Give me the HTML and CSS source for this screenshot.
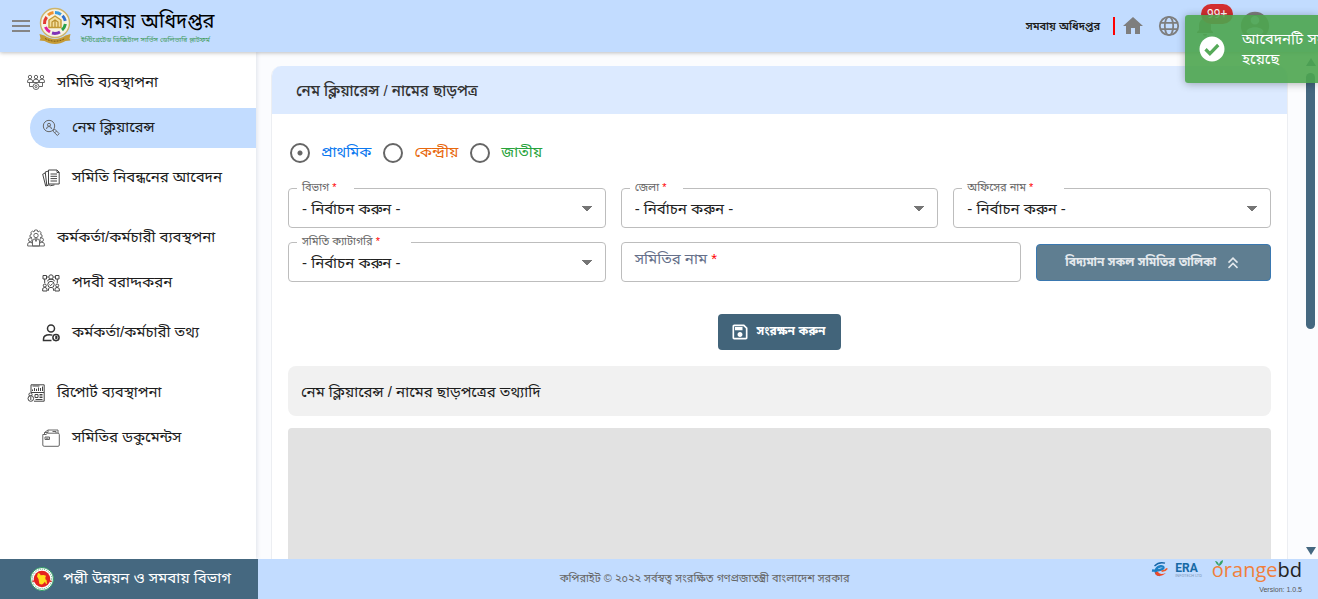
FILE: index.html
```html
<!DOCTYPE html>
<html lang="bn">
<head>
<meta charset="utf-8">
<meta name="viewport" content="width=device-width, initial-scale=1">
<title>নেম ক্লিয়ারেন্স</title>
<link rel="stylesheet" href="styles.css">
</head>
<body>
<div class="app">
  <header class="topbar">
    <button class="icon-btn menu-btn" type="button" aria-label="মেনু">
      <svg width="20" height="14" viewBox="0 0 20 14"><path d="M1 2h18M1 7h18M1 12h18" stroke="#858585" stroke-width="2"/></svg>
    </button>
    <svg class="emblem" width="34" height="38" viewBox="0 0 34 38" aria-hidden="true">
      <circle cx="17" cy="16" r="14.500" fill="#f6f3e4" stroke="#cdb46a" stroke-width="1.400"/>
      <g fill="none" stroke-width="3">
        <path d="M17 5.500a10.500 10.500 0 0 1 6 2" stroke="#3b9de0"/>
        <path d="M24.500 8.800a10.500 10.500 0 0 1 2.800 5" stroke="#2f6fd0"/>
        <path d="M27.400 17a10.500 10.500 0 0 1-3.400 6" stroke="#28a04a"/>
        <path d="M22 25a10.500 10.500 0 0 1-8 1" stroke="#8034b8"/>
        <path d="M12 25a10.500 10.500 0 0 1-4.600-5" stroke="#e0219a"/>
        <path d="M6.500 17a10.500 10.500 0 0 1 2.200-7" stroke="#e23b32"/>
        <path d="M10 8.200a10.500 10.500 0 0 1 5.500-2.600" stroke="#f0902e"/>
      </g>
      <path d="M17 9l6 4v7.500H11V13z" fill="#f3dfa0" stroke="#c49a34" stroke-width="1.400"/>
      <path d="M14 20v-5l3-2 3 2v5M17 13v7" fill="none" stroke="#b98e2c" stroke-width="1.200"/>
      <path d="M1.500 27l5 1.500C13 33 21 33 27.500 28.500l5-1.500-1 4.500 1 2-5 .5C21 38 13 38 6.500 34l-5-.5 1-2z" fill="#c69b35"/>
      <path d="M7 31.500c6.500 3.600 13.500 3.600 20 0" fill="none" stroke="#7d5d15" stroke-width="1" stroke-dasharray="2 1"/>
    </svg>
    <div class="brand">
      <h1 class="brand-name">সমবায় অধিদপ্তর</h1>
      <p class="brand-tag">ইন্টিগ্রেটেড ডিজিটাল সার্ভিস ডেলিভারি প্লাটফর্ম</p>
    </div>
    <div class="top-actions">
      <span class="office">সমবায় অধিদপ্তর</span>
      <button class="icon-btn" type="button" aria-label="হোম"><svg width="24" height="24" viewBox="0 0 24 24" fill="#7e7e7e"><path d="M10 20v-6h4v6h5v-8h3L12 3 2 12h3v8z"/></svg></button>
      <button class="icon-btn" type="button" aria-label="ভাষা"><svg width="24" height="24" viewBox="0 0 24 24" fill="none" stroke="#7e7e7e" stroke-width="1.800"><circle cx="12" cy="12" r="9.200"/><ellipse cx="12" cy="12" rx="4.200" ry="9.200"/><path d="M3.500 8.800h17M3.500 15.200h17"/></svg></button>
      <button class="icon-btn bell" type="button" aria-label="বিজ্ঞপ্তি"><svg width="24" height="24" viewBox="0 0 24 24" fill="#7e7e7e"><path d="M12 22c1.100 0 2-.9 2-2h-4c0 1.100.9 2 2 2zm6-6v-5c0-3.070-1.640-5.640-4.500-6.320V4c0-.83-.67-1.500-1.500-1.500s-1.500.67-1.500 1.500v.68C7.630 5.360 6 7.920 6 11v5l-2 2v1h16v-1z"/></svg><span class="badge">99+</span></button>
      <button class="icon-btn profile" type="button" aria-label="প্রোফাইল"><svg width="34" height="34" viewBox="0 0 24 24" fill="#7e7e7e"><path d="M12 2C6.480 2 2 6.480 2 12s4.480 10 10 10 10-4.480 10-10S17.520 2 12 2zm0 3c1.660 0 3 1.340 3 3s-1.340 3-3 3-3-1.340-3-3 1.340-3 3-3zm0 14.200c-2.500 0-4.710-1.280-6-3.220.03-1.990 4-3.080 6-3.080 1.990 0 5.970 1.090 6 3.080-1.290 1.940-3.500 3.220-6 3.220z"/></svg></button>
    </div>
  </header>

  <div class="body">
    <nav class="sidebar">
      <a class="nav-item nav-group" href="#"><svg class="nav-icon" viewBox="0 0 18 18"><circle cx="3" cy="3" r="1.700"/><circle cx="9" cy="3" r="1.700"/><circle cx="15" cy="3" r="1.700"/><path d="M.6 8.500V7Q.6 5.200 3 5.200T5.600 7v1.500M6.400 8V7Q6.400 5.200 9 5.200T11.600 7v1M12.400 8.500V7q0-1.800 2.600-1.800T17.400 7v1.500H.6M2.500 9v3.500H6M15.500 9v3.500H12"/><circle cx="9" cy="12.500" r="3"/><circle cx="9" cy="12.500" r="1.100"/></svg><span>সমিতি ব্যবস্থাপনা</span></a>
      <a class="nav-item nav-sub nav-active" href="#"><svg class="nav-icon" viewBox="0 0 18 18"><circle cx="7" cy="7" r="5.700"/><circle cx="7" cy="5.800" r="1.500"/><path d="M4.500 10q0-2.500 2.500-2.500T9.500 10M11.300 10.800l1.500-.6 4.300 4.500-1.700 1.800-4.300-4.200zM12.800 13.800l1.800-1.800"/></svg><span>নেম ক্লিয়ারেন্স</span></a>
      <a class="nav-item nav-sub nav-spaced" href="#"><svg class="nav-icon nav-dark" viewBox="0 0 18 18"><path d="M6.500 1h8.500l2.200 2.200V15H6.500zM15 1v2.500h2.200M8.500 5h6.500M8.500 7.300h6.500M8.500 9.600h6.500M8.500 12h6.500M6.500 2L3.200 3l1.600 13.300 2-.3M3.300 4L.7 5.200l3 11.800 2.500-.7M6.500 15.500l2 1.200 4-.8"/></svg><span>সমিতি নিবন্ধনের আবেদন</span></a>
      <a class="nav-item nav-group nav-break" href="#"><svg class="nav-icon" viewBox="0 0 18 18"><path d="M5 8.500l-2-.3V6l1.500-.7-.7-1.800 1.700-1.400L7 3l.8-2h2.400L11 3l1.500-.9 1.700 1.400-.7 1.800L15 6v2.200l-2 .3"/><circle cx="9" cy="6.500" r="2.200"/><circle cx="3.300" cy="10.800" r="1.800"/><circle cx="14.700" cy="10.800" r="1.800"/><path d="M5.500 17v-5q0-2.300 3.500-2.300t3.500 2.300v5zM.7 17v-2q0-1.700 2.500-1.700T5.500 15M.7 17h16.600v-2q0-1.700-2.500-1.700T12.500 15M8 10l1 2.500 1-2.500"/></svg><span>কর্মকর্তা/কর্মচারী ব্যবস্থপনা</span></a>
      <a class="nav-item nav-sub" href="#"><svg class="nav-icon nav-dark" viewBox="0 0 18 18"><circle cx="9" cy="3" r="2.200"/><path d="M5.500 7.300Q5.500 5.200 9 5.200t3.500 2.100M1 1.500h3.500V5H1zM13.500 1.500H17V5h-3.500zM4.500 3h2M11.500 3h2M2.700 5v4M15.300 5v4"/><circle cx="9" cy="10.500" r="3.200"/><path d="M7.500 10.500l1.100 1.200 2-2.200"/><circle cx="2.800" cy="11.500" r="1.500"/><circle cx="15.200" cy="11.500" r="1.500"/><path d="M.7 17v-2q0-1.500 2-1.500T5 15v2zM13 17v-2q0-1.500 2-1.500T17.300 15v2zM6 17l1-3M12 17l-1-3"/></svg><span>পদবী বরাদ্দকরন</span></a>
      <a class="nav-item nav-sub nav-spaced" href="#"><svg class="nav-icon nav-bold" viewBox="0 0 18 18"><circle cx="9" cy="4.500" r="3.500"/><path d="M9.500 16.500H1.500V15q0-4.300 6-4.300 1.500 0 2.800.4"/><circle cx="14" cy="13.600" r="3.100"/><path d="M14 11.800v3.500M13.300 12.800h1.400v2"/></svg><span>কর্মকর্তা/কর্মচারী তথ্য</span></a>
      <a class="nav-item nav-group nav-break" href="#"><svg class="nav-icon nav-dark" viewBox="0 0 18 18"><path d="M4 8V.8h13.200v16.400H7M4 8.500h13M5.500 7V5.500M7.500 7V4M9.500 7V4.800M11.500 7V3.500M13.500 7V4M15.500 7V2.500M5.500 2h7M8 10.500h3v3H8zM12.500 10.500h3M12.500 12h3M12.500 13.500h3M8.500 15.500h7"/><circle cx="3.500" cy="10.500" r="1.600"/><circle cx="3.800" cy="14.500" r="2.800"/><path d="M3.800 13v3"/></svg><span>রিপোর্ট ব্যবস্থাপনা</span></a>
      <a class="nav-item nav-sub" href="#"><svg class="nav-icon" viewBox="0 0 18 18"><path d="M1 5.500h3l1.500-1.300H16q1.300 0 1.300 1.300V16q0 1.300-1.300 1.300H2.200Q.8 17.300.8 16V5.500zM2.500 5V3.500L6 1h10v3M6 1v2.500H2.500M10.500 2.500H14V4M3 8h4.500v2.500H3zM4 9.200h2.500"/></svg><span>সমিতির ডকুমেন্টস</span></a>
    </nav>

    <main class="main">
      <section class="card">
        <h2 class="card-title">নেম ক্লিয়ারেন্স / নামের ছাড়পত্র</h2>
        <form class="card-body">
          <div class="radios">
            <label class="radio radio-blue"><input type="radio" name="level" checked><span>প্রাথমিক</span></label>
            <label class="radio radio-orange"><input type="radio" name="level"><span>কেন্দ্রীয়</span></label>
            <label class="radio radio-green"><input type="radio" name="level"><span>জাতীয়</span></label>
          </div>
          <div class="fields">
            <div class="field">
              <select class="control" id="division"><option>- নির্বাচন করুন -</option></select>
              <label class="field-label" for="division">বিভাগ <b>*</b></label>
            </div>
            <div class="field">
              <select class="control" id="district"><option>- নির্বাচন করুন -</option></select>
              <label class="field-label" for="district">জেলা <b>*</b></label>
            </div>
            <div class="field">
              <select class="control" id="office"><option>- নির্বাচন করুন -</option></select>
              <label class="field-label field-label-wide" for="office">অফিসের নাম <b>*</b></label>
            </div>
            <div class="field">
              <select class="control" id="category"><option>- নির্বাচন করুন -</option></select>
              <label class="field-label field-label-wide" for="category">সমিতি ক্যাটাগরি <b>*</b></label>
            </div>
            <div class="field field-name">
              <input class="control" id="name" type="text">
              <label class="name-label" for="name">সমিতির নাম <b>*</b></label>
            </div>
            <button class="list-btn" type="button"><span>বিদ্যমান সকল সমিতির তালিকা</span><svg width="18" height="18" viewBox="0 0 24 24" fill="none" stroke="currentColor" stroke-width="2"><path d="M6 11.500l6-6 6 6M6 18.500l6-6 6 6"/></svg></button>
          </div>
          <button class="save-btn" type="button"><svg width="20" height="20" viewBox="0 0 24 24" fill="currentColor"><path d="M17 3H5c-1.110 0-2 .9-2 2v14c0 1.100.89 2 2 2h14c1.100 0 2-.9 2-2V7l-4-4zm2 16H5V5h11.170L19 7.830V19zm-7-7c-1.660 0-3 1.340-3 3s1.340 3 3 3 3-1.340 3-3-1.340-3-3-3zM6 6h9v4H6z"/></svg><span>সংরক্ষন করুন</span></button>
          <h3 class="sub-title">নেম ক্লিয়ারেন্স / নামের ছাড়পত্রের তথ্যাদি</h3>
          <div class="placeholder"></div>
        </form>
      </section>
    </main>

    <div class="scroll" aria-hidden="true">
      <svg width="10" height="8" viewBox="0 0 10 8"><path d="M5 0l5 8H0z" fill="#456880"/></svg>
      <div class="scroll-track"><div class="scroll-thumb"></div></div>
      <svg width="10" height="8" viewBox="0 0 10 8"><path d="M0 0h10L5 8z" fill="#456880"/></svg>
    </div>
  </div>

  <footer class="footer">
    <div class="division">
      <svg width="24" height="24" viewBox="0 0 24 24" aria-hidden="true"><circle cx="12" cy="12" r="11.500" fill="#fff" stroke="#2b9b61"/><circle cx="12" cy="12" r="9.800" fill="none" stroke="#4aa877" stroke-dasharray="1 1"/><circle cx="12" cy="12" r="8.300" fill="#e42320"/><path d="M8 6l2 .8.500 1.500 3-.3 2.500.8-.7 2 .2 1.700 1 .5.500 4-1.300-.5-.7-2-1 1.500-2 1.500-2.500-.5L9 15l-.5-3L7 9.500z" fill="#ffdf1c"/><path d="M2.500 14.500l1.500-.6M20 14l1.500.5" stroke="#e42320" stroke-width="1.500"/></svg>
      <span>পল্লী উন্নয়ন ও সমবায় বিভাগ</span>
    </div>
    <p class="copyright">কপিরাইট © ২০২২ সর্বস্বত্ব সংরক্ষিত গণপ্রজাতন্ত্রী বাংলাদেশ সরকার</p>
    <div class="partners">
      <div class="logos">
        <svg width="18" height="16" viewBox="0 0 18 16" aria-hidden="true"><path d="M1 8.500C5 9 12 8 12.500 5.700 12.800 3.500 7 3.500 5 7.500q-1.500 5 4 5.500" fill="none" stroke="#1c7fc4" stroke-width="2.400"/><path d="M3.500 4Q8-.5 14 1.200" fill="none" stroke="#1565a8" stroke-width="1.400"/><path d="M4 10.500c0 4 6 5 11 .5-4 1.500-7 1.500-8-1.500z" fill="#ef4a2a"/><path d="M10 8.500q4-.5 5.500-2.500l1.500.7q-2 3-6 3.300z" fill="#ef5a2a"/></svg>
        <span class="era"><b>ERA</b><small>INFOTECH LTD</small></span>
        <span class="orange"><svg class="leaf" width="8" height="6" viewBox="0 0 8 6"><path d="M4 6Q1 4 0 1q3 0 4 4Q4.500 1 8 0 8 4 4 6z" fill="#38a169"/></svg><span>orange</span><i>bd</i></span>
      </div>
      <span class="version">Version: 1.0.5</span>
    </div>
  </footer>

  <div class="toast" role="status">
    <svg class="toast-icon" width="30" height="30" viewBox="0 0 24 24" fill="#fff"><path d="M12 2C6.480 2 2 6.480 2 12s4.480 10 10 10 10-4.480 10-10S17.520 2 12 2z"/><path d="M6.800 12.200l3.500 3.500 6.700-6.900" fill="none" stroke="#56aa59" stroke-width="2.600"/></svg>
    <p class="toast-text">আবেদনটি সফ<br>হয়েছে</p>
  </div>
</div>
</body>
</html>
```
FILE: styles.css
```css
* { box-sizing: border-box; }
body, h1, h2, h3, p { margin: 0; }
body {
  font-family: "Liberation Sans", "Noto Sans", "Noto Sans Bengali", sans-serif;
  font-size: 15px;
  color: #1c1c1c;
}
button, select, input { font: inherit; }
a { color: inherit; text-decoration: none; }
.app { display: flex; flex-direction: column; height: 100vh; overflow: hidden; position: relative; }

.topbar {
  display: flex; align-items: center; flex: none; height: 52px;
  padding: 0 46px 0 11px;
  background: #c2dcff;
  box-shadow: 0 1px 4px rgba(0, 0, 0, .25);
  z-index: 1;
}
.icon-btn { display: flex; padding: 0; border: 0; background: none; }
.emblem { margin-left: 7px; }
.brand { margin-left: 9px; }
.brand-name { font-size: 20px; line-height: 28px; font-weight: 400; color: #000; white-space: nowrap; }
.brand-tag { font-size: 7px; line-height: 10px; color: #3f9a5c; white-space: nowrap; }
.top-actions { display: flex; align-items: center; margin-left: auto; gap: 12px; }
.office {
  padding-right: 13px; margin-right: -6px; border-right: 2px solid #f00;
  font-size: 11px; line-height: 18px; font-weight: 600;
}
.bell { position: relative; }
.badge {
  position: absolute; top: -10px; left: 8px;
  padding: 0 6px; border-radius: 10px;
  background: #d32f2f; color: #fff;
  font: 12px/20px Roboto, sans-serif;
}
.profile { margin-left: 9px; }

.body { display: flex; flex: 1; min-height: 0; background: #fbfcfe; }
.sidebar {
  flex: none; width: 256px; padding-top: 11px;
  background: #fff; box-shadow: 1px 0 4px rgba(60, 80, 120, .15);
}
.nav-item { display: flex; align-items: center; height: 40px; white-space: nowrap; }
.nav-group { padding-left: 27px; gap: 12px; margin-bottom: 5px; }
.nav-sub { margin-left: 30px; padding-left: 12px; gap: 12px; }
.nav-spaced { margin-top: 10px; }
.nav-break { margin-top: 20px; }
.nav-active { border-radius: 20px 0 0 20px; background: #c2dcff; }
.nav-icon { flex: none; width: 18px; height: 18px; fill: none; stroke: #666; stroke-width: 1; }
.nav-dark { stroke: #444; }
.nav-bold { stroke: #333; stroke-width: 1.5; }

.main { flex: 1; min-width: 0; overflow: hidden; padding: 14px 15px 0 15px; }
.card { border: 1px solid #eceef2; border-top: 0; border-radius: 10px; background: #fff; overflow: hidden; }
.card-title {
  padding: 13px 24px 11px; background: #dceaff;
  font-size: 15px; line-height: 24px; font-weight: 500; color: #333;
}
.card-body { padding: 24px 16px; }
.radios { display: flex; gap: 12px; height: 30px; align-items: center; }
.radio { display: flex; align-items: center; gap: 11px; }
.radio input {
  appearance: none; width: 20px; height: 20px; margin: 0 0 0 2px;
  border: 2px solid #666; border-radius: 50%;
}
.radio input:checked { background: radial-gradient(circle, #666 0 2px, transparent 3px); }
.radio + .radio { margin-left: -2px; }
.radio-blue { color: #0a78f0; }
.radio-orange { color: #e8680c; }
.radio-green { color: #28a33c; }

.fields { display: grid; grid-template-columns: repeat(12, 1fr); gap: 14px 15px; margin-top: 20px; }
.field { position: relative; grid-column: span 4; }
.field-name { grid-column: span 5; }
.control {
  display: block; width: 100%; height: 40px; padding: 0 13px;
  border: 1px solid #bdbdbd; border-radius: 4px; background: #fff; color: #222;
}
select.control {
  appearance: none;
  background: linear-gradient(to bottom right, #757575 50%, transparent 52%) right 13px center / 5px 5px no-repeat, linear-gradient(to bottom left, #757575 50%, transparent 52%) right 18px center / 5px 5px no-repeat, #fff;
}
.field b { font-weight: 400; color: #f00; }
.field-label {
  position: absolute; top: -9px; left: 9px; padding: 0 17px 0 5px;
  background: #fff; color: #666; font-size: 11px; line-height: 16px;
}
.field-label-wide { padding-right: 31px; }
.name-label { position: absolute; top: 5px; left: 14px; color: #66708a; line-height: 24px; }
.list-btn {
  grid-column: span 3; display: flex; align-items: center; justify-content: center; gap: 8px;
  height: 37px; margin-top: 2px; padding: 0;
  border: 1px solid #3a78b0; border-radius: 4px;
  background: #5f7e91; color: #e4e9ed; font-size: 12px; font-weight: 700; white-space: nowrap;
}
.save-btn {
  display: flex; align-items: center; gap: 7px; height: 36px;
  margin: 32px auto 16px; padding: 0 16px 0 12px;
  border: 0; border-radius: 4px; background: #42647a; color: #fff;
  font-size: 12px; font-weight: 700;
}
.sub-title {
  padding: 14px 13px 12px; border-radius: 8px; background: #f1f1f1;
  font-size: 15px; line-height: 24px; font-weight: 400;
}
.placeholder { height: 280px; margin-top: 12px; border-radius: 4px; background: #e2e2e2; }

.scroll {
  display: flex; flex-direction: column; align-items: center; flex: none;
  width: 15px; padding: 6px 0 4px; background: #fbfcfe;
}
.scroll-track { flex: 1; width: 9px; padding-top: 7px; }
.scroll-thumb { height: 54%; border-radius: 5px; background: #456880; }

.footer { display: flex; flex: none; height: 40px; background: #c2dcff; z-index: 1; }
.division {
  display: flex; align-items: center; gap: 9px; flex: none; width: 258px; padding-left: 30px;
  background: #456880; color: #fff; white-space: nowrap;
}
.copyright { flex: 1; align-self: center; text-align: center; font-size: 11px; color: #666; }
.partners { display: flex; flex-direction: column; align-items: flex-end; padding-right: 16px; }
.logos { display: flex; align-items: center; height: 24px; }
.era { display: flex; flex-direction: column; margin: 0 10px 0 6px; color: #1769a5; font: 12px/12px Roboto, sans-serif; }
.era small { font-size: 4px; line-height: 4px; color: #7e97b8; }
.orange { position: relative; color: #f0803c; font: 20px/20px "Open Sans", sans-serif; }
.orange i { color: #222; font-style: normal; }
.leaf { position: absolute; top: 0; left: 3px; }
.version { color: #555; font: 7px/18px "Liberation Sans", sans-serif; }

.toast {
  position: absolute; top: 15px; right: 0; z-index: 2;
  display: flex; align-items: center; gap: 15px; width: 133px; height: 68px;
  padding-left: 12px; border-radius: 3px 0 0 3px; overflow: hidden;
  background: rgba(76, 165, 79, .9); color: #fff;
  box-shadow: 0 1px 8px rgba(0, 0, 0, .3);
}
.toast-icon { flex: none; }
.toast-text { line-height: 20px; white-space: nowrap; }
```
